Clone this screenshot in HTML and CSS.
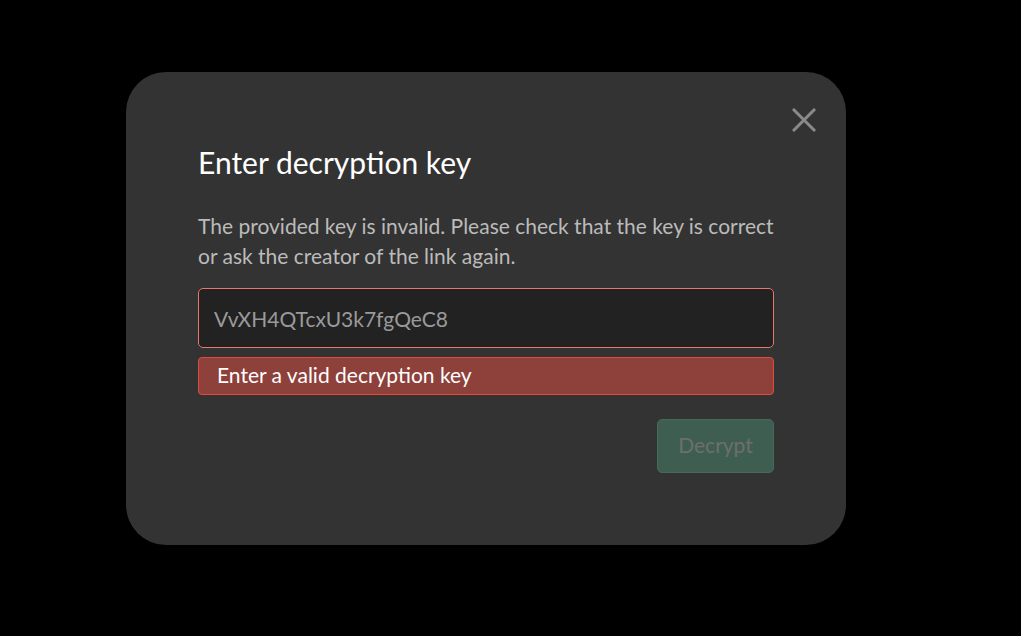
FILE: index.html
```html
<!DOCTYPE html>
<html lang="en">
<head>
    <meta charset="UTF-8">
    <meta name="viewport" content="width=device-width, initial-scale=1.0">
    <title>Enter decryption key</title>
    <link rel="stylesheet" href="styles.css">
</head>
<body>
    <div class="modal">
        <button class="close" type="button" aria-label="Close">
            <svg width="24" height="24" viewBox="0 0 24 24">
                <path d="M2 2 L22 22 M22 2 L2 22" stroke="#8a8a8a" stroke-width="3" stroke-linecap="square"/>
            </svg>
        </button>
        <h1>Enter decryption key</h1>
        <p class="hint">The provided key is invalid. Please check that the key is correct or ask the creator of the link again.</p>
        <form class="key-form">
            <input type="text" class="key-input" value="VvXH4QTcxU3k7fgQeC8">
            <div class="error">Enter a valid decryption key</div>
            <div class="actions">
                <button type="submit" class="decrypt" disabled>Decrypt</button>
            </div>
        </form>
    </div>
</body>
</html>
```

FILE: styles.css
```css
body {
    margin: 0;
    background-color: #000;
    font-family: Lato, "Open Sans", sans-serif;
    height: 636px;
}

.modal {
    position: relative;
    box-sizing: border-box;
    width: 720px;
    height: 473px;
    margin: 72px 0 0 126px;
    padding: 72px;
    background-color: #333;
    border-radius: 40px;
}

.close {
    position: absolute;
    top: 36px;
    right: 30px;
    padding: 0;
    border: none;
    background: none;
    cursor: pointer;
}

.close svg {
    display: block;
}

h1 {
    margin: 0;
    font-size: 30px;
    font-weight: 400;
    color: #fff;
    line-height: 36px;
}

.hint {
    margin: 31px 0 0;
    font-size: 21px;
    line-height: 30px;
    color: #bbb;
}

.key-form {
    margin-top: 17px;
    display: flex;
    flex-direction: column;
}

.key-input {
    box-sizing: border-box;
    width: 100%;
    height: 60px;
    padding: 0 15px;
    font-family: inherit;
    font-size: 21px;
    color: #9a9a9a;
    background-color: #222;
    border: 1px solid #e8766b;
    border-radius: 5px;
    outline: none;
}

.error {
    margin-top: 9px;
    height: 38px;
    box-sizing: border-box;
    padding: 0 18px 3px;
    display: flex;
    align-items: center;
    font-size: 21px;
    color: #fff;
    background-color: #8e403b;
    border: 1px solid #e04b3e;
    border-radius: 4px;
}

.actions {
    margin-top: 24px;
    display: flex;
    justify-content: flex-end;
}

.decrypt {
    width: 117px;
    height: 54px;
    padding: 0 0 4px;
    font-family: inherit;
    font-size: 21px;
    color: #6e6e6e;
    background-color: #3e5e52;
    border: 1px solid #47685a;
    border-radius: 5px;
}
```
